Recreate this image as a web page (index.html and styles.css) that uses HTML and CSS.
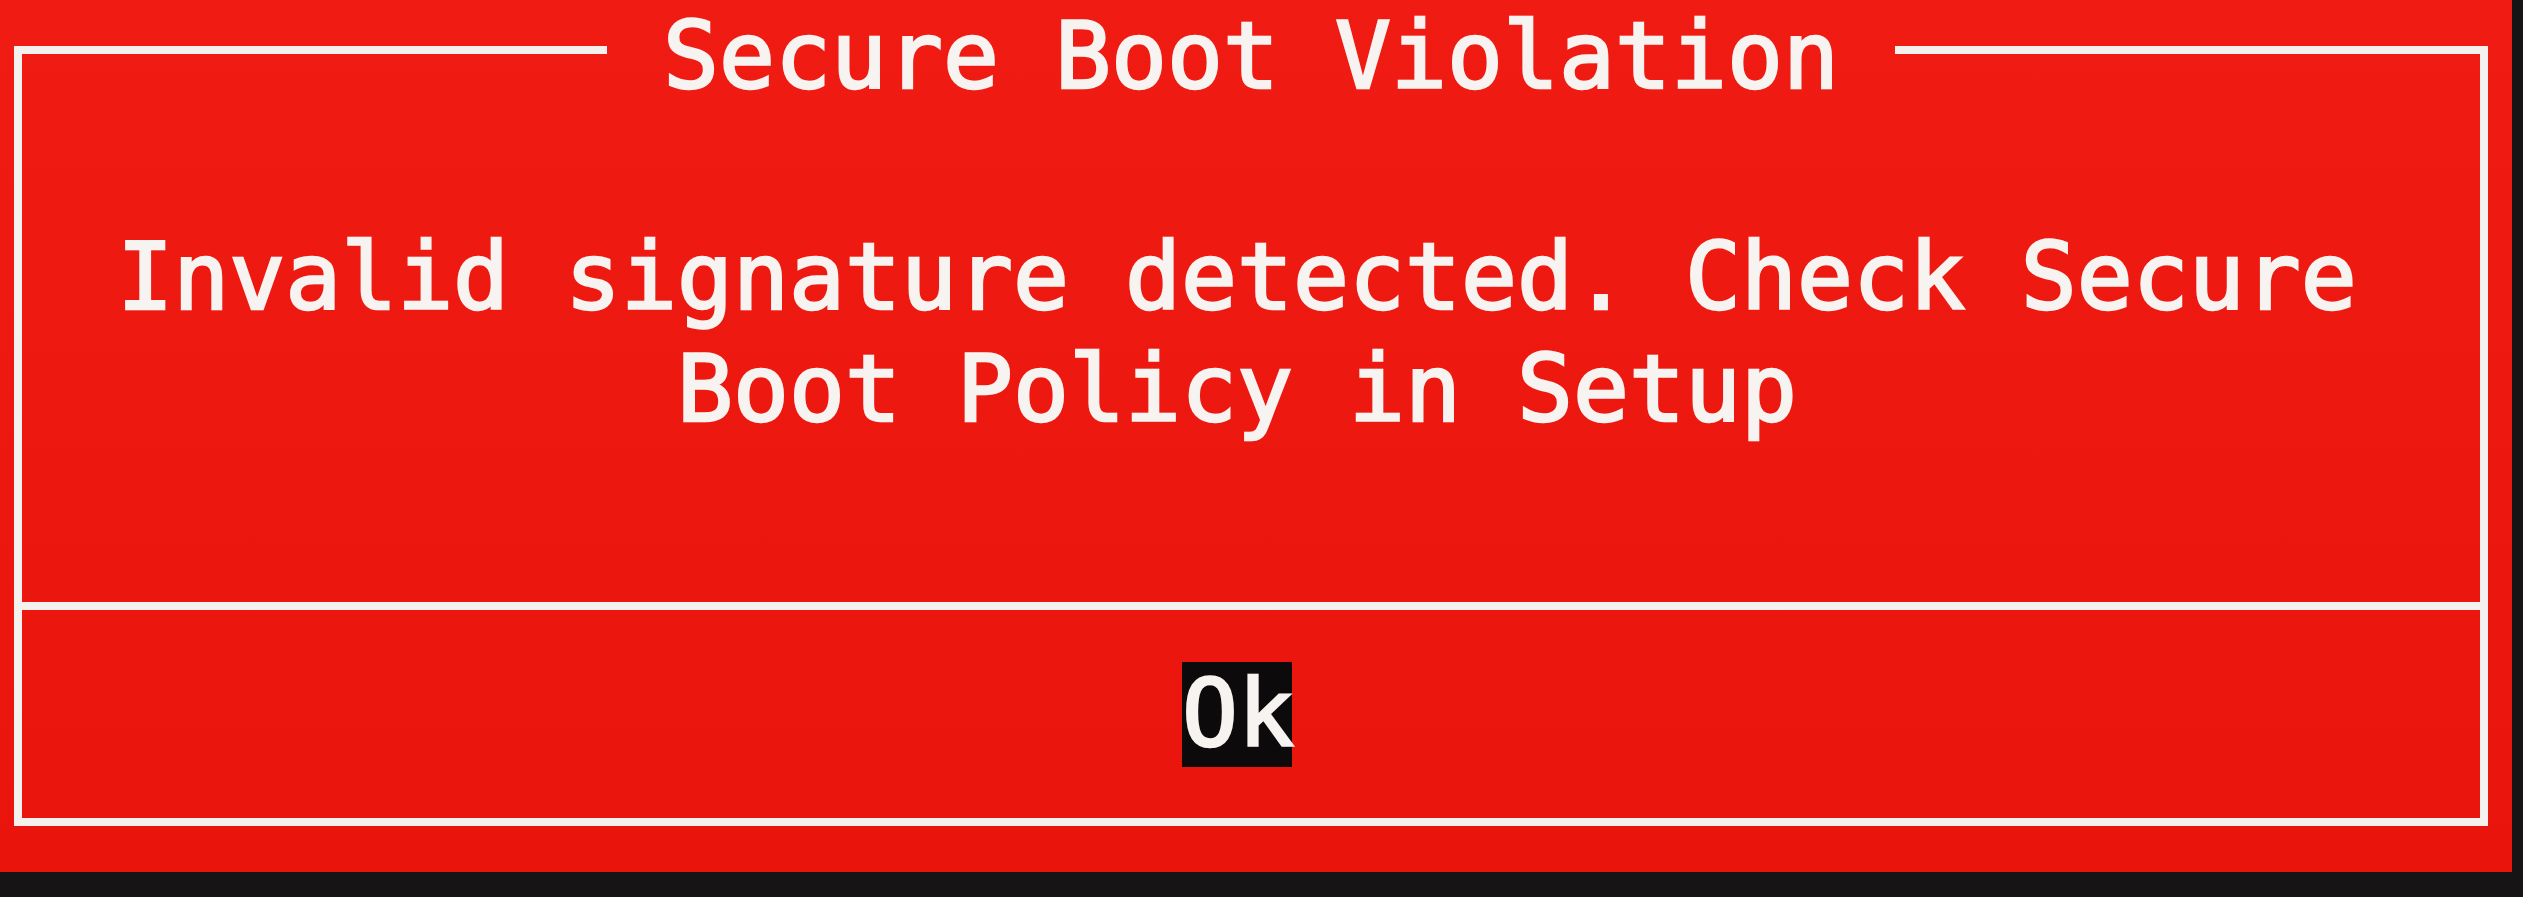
FILE: index.html
```html
<!DOCTYPE html>
<html lang="en">
<head>
    <meta charset="UTF-8">
    <meta name="viewport" content="width=device-width, initial-scale=1.0">
    <title>Secure Boot Violation</title>
    <link rel="stylesheet" href="styles.css">
</head>
<body>
    <div class="screen">
        <fieldset class="dialog">
            <legend class="dialog-title">Secure Boot Violation</legend>
            <div class="message">
                <p>Invalid signature detected. Check Secure</p>
                <p>Boot Policy in Setup</p>
            </div>
            <div class="actions">
                <button type="button" class="ok-btn">Ok</button>
            </div>
        </fieldset>
    </div>
</body>
</html>
```

FILE: styles.css
```css
body {
    margin: 0;
    background: #161414;
    font-family: "DejaVu Sans Mono", "Liberation Mono", monospace;
    color: #f7f3f1;
    -webkit-text-stroke: 2.5px #f7f3f1;
    height: 897px;
    overflow: hidden;
}
.screen {
    width: 2512px;
    height: 872px;
    background: linear-gradient(#f01c14, #e9150d);
}
.dialog {
    box-sizing: border-box;
    width: 2474px;
    margin: 0 0 0 14px;
    padding: 0;
    border: 8px solid #f5f1ef;
    min-inline-size: 0;
}
.dialog-title {
    margin: 0 auto;
    padding: 0 56px;
    font-size: 93px;
    line-height: 100px;
    position: relative;
    top: 6px;
}
.message {
    box-sizing: border-box;
    height: 510px;
    padding: 121px 28px 0 0;
    border-bottom: 8px solid #f5f1ef;
    text-align: center;
    font-size: 93px;
    line-height: 112px;
}
.message p {
    margin: 0;
    white-space: pre;
}
.actions {
    height: 208px;
    display: flex;
    justify-content: center;
    align-items: center;
    padding-right: 28px;
}
.ok-btn {
    background: #0c0a0a;
    color: #f7f3f1;
    -webkit-text-stroke: 2.5px #f7f3f1;
    border: none;
    padding: 0;
    width: 110px;
    height: 105px;
    font-family: inherit;
    font-size: 93px;
    line-height: 105px;
}
```
